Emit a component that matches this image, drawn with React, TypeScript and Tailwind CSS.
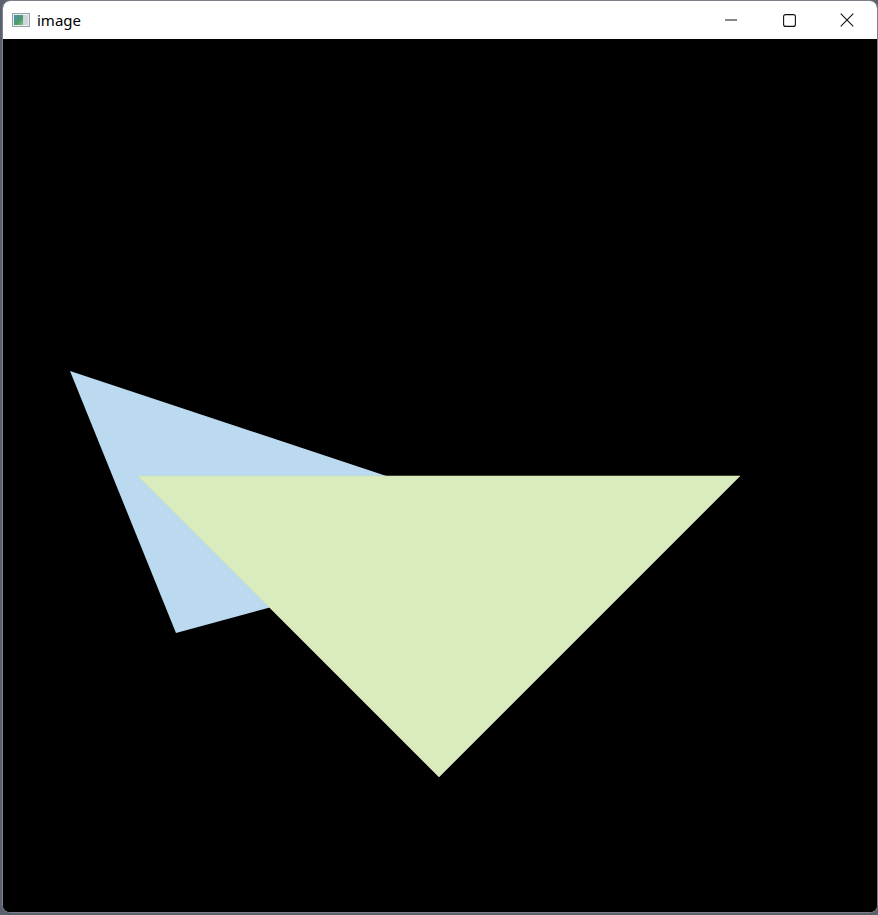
import React from 'react';

// Window title bar icon (little picture frame)
const ImageIcon = () => (
  <svg width="18" height="14" viewBox="0 0 18 14">
    <defs>
      <linearGradient id="pic" x1="0" y1="0" x2="1" y2="1">
        <stop offset="0" stopColor="#4f8fb0" />
        <stop offset="0.6" stopColor="#4e9c6c" />
        <stop offset="1" stopColor="#8cc08a" />
      </linearGradient>
    </defs>
    <rect x="0.5" y="0.5" width="17" height="13" fill="#e8ecef" stroke="#9aa3ab" />
    <rect x="2" y="2" width="9" height="10" fill="url(#pic)" />
    <rect x="11" y="2" width="5" height="10" fill="#cfd6dc" />
  </svg>
);

const Controls = () => (
  <div className="flex h-full pr-[1px]">
    <button className="w-[58px] h-full flex items-center justify-center">
      <svg width="12" height="12" viewBox="0 0 12 12">
        <line x1="0" y1="6" x2="12" y2="6" stroke="#111" strokeWidth="1.1" />
      </svg>
    </button>
    <button className="w-[58px] h-full flex items-center justify-center">
      <svg width="13" height="13" viewBox="0 0 13 13">
        <rect x="0.6" y="0.6" width="11.8" height="11.8" rx="2" fill="none" stroke="#111" strokeWidth="1.1" />
      </svg>
    </button>
    <button className="w-[58px] h-full flex items-center justify-center">
      <svg width="14" height="14" viewBox="0 0 14 14">
        <path d="M0.7 0.7 L13.3 13.3 M13.3 0.7 L0.7 13.3" stroke="#111" strokeWidth="1.1" />
      </svg>
    </button>
  </div>
);

export default function App() {
  return (
    <div className="w-[878px] h-[915px] bg-[#5b616c] pl-[2px] overflow-hidden">
      <div className="w-[876px] h-[913px] flex flex-col rounded-lg overflow-hidden border border-[#7d8088] bg-black">
        <div className="h-[38px] bg-white flex items-center justify-between shrink-0">
          <div className="flex items-center gap-[7px] pl-[9px]">
            <ImageIcon />
            <span className="text-[15px] text-black leading-none" style={{ fontFamily: '"Segoe UI", "Noto Sans", sans-serif' }}>
              image
            </span>
          </div>
          <Controls />
        </div>
        <div className="relative flex-1 bg-black">
          <svg className="absolute inset-0 w-full h-full" viewBox="3 39 874 873" preserveAspectRatio="none">
            <polygon points="70,371 176,633 552,531" fill="#bbdaef" />
            <polygon points="138,476 740,476 439,777" fill="#daecbe" stroke="#c9dfae" strokeWidth="0.6" />
          </svg>
        </div>
      </div>
    </div>
  );
}
